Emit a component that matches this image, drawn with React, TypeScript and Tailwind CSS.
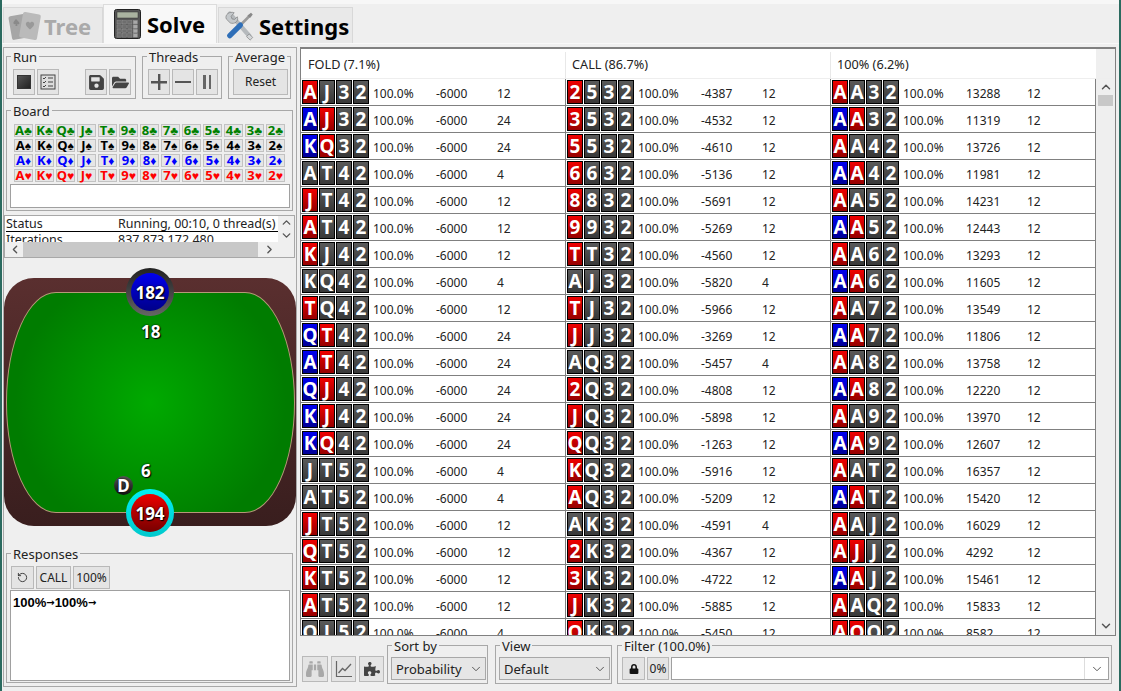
import type { ReactNode } from "react";
import { ChevronDown, ChevronLeft, ChevronRight, ChevronUp, RotateCcw } from "lucide-react";
import { FaBinoculars, FaFolderOpen, FaLock, FaPuzzlePiece, FaSave } from "react-icons/fa";

const BOARD_RANKS = ["A", "K", "Q", "J", "T", "9", "8", "7", "6", "5", "4", "3", "2"];
const BOARD_SUITS = [
  { suit: "♣", color: "text-[#008000]" },
  { suit: "♠", color: "text-black" },
  { suit: "♦", color: "text-[#0000ff]" },
  { suit: "♥", color: "text-[#ff0000]" },
];

const CARD_BG: Record<string, string> = {
  r: "from-[#f00000] to-[#960000]",
  b: "from-[#0000f0] to-[#000096]",
  g: "from-[#5a5a5a] to-[#383838]",
};

// cards, suit colours, ev, count
const FOLD_ROWS = [
  "AJ32 rggg -6000 12",
  "AJ32 brgg -6000 24",
  "KQ32 brgg -6000 24",
  "AT42 gggg -6000 4",
  "JT42 rggg -6000 12",
  "AT42 rggg -6000 12",
  "KJ42 rggg -6000 12",
  "KQ42 gggg -6000 4",
  "TQ42 rggg -6000 12",
  "QT42 brgg -6000 24",
  "AT42 brgg -6000 24",
  "QJ42 brgg -6000 24",
  "KJ42 brgg -6000 24",
  "KQ42 brgg -6000 24",
  "JT52 gggg -6000 4",
  "AT52 gggg -6000 4",
  "JT52 rggg -6000 12",
  "QT52 rggg -6000 12",
  "KT52 rggg -6000 12",
  "AT52 rggg -6000 12",
  "QJ52 gggg -6000 4",
];

const CALL_ROWS = [
  "2532 rggg -4387 12",
  "3532 rggg -4532 12",
  "5532 rggg -4610 12",
  "6632 rggg -5136 12",
  "8832 rggg -5691 12",
  "9932 rggg -5269 12",
  "TT32 rggg -4560 12",
  "AJ32 gggg -5820 4",
  "TJ32 rggg -5966 12",
  "JJ32 rggg -3269 12",
  "AQ32 gggg -5457 4",
  "2Q32 rggg -4808 12",
  "JQ32 rggg -5898 12",
  "QQ32 rggg -1263 12",
  "KQ32 rggg -5916 12",
  "AQ32 rggg -5209 12",
  "AK32 gggg -4591 4",
  "2K32 rggg -4367 12",
  "3K32 rggg -4722 12",
  "JK32 rggg -5885 12",
  "QK32 rggg -5450 12",
];

const RAISE_ROWS = [
  "AA32 rggg 13288 12",
  "AA32 brgg 11319 12",
  "AA42 rggg 13726 12",
  "AA42 brgg 11981 12",
  "AA52 rggg 14231 12",
  "AA52 brgg 12443 12",
  "AA62 rggg 13293 12",
  "AA62 brgg 11605 12",
  "AA72 rggg 13549 12",
  "AA72 brgg 11806 12",
  "AA82 rggg 13758 12",
  "AA82 brgg 12220 12",
  "AA92 rggg 13970 12",
  "AA92 brgg 12607 12",
  "AAT2 rggg 16357 12",
  "AAT2 brgg 15420 12",
  "AAJ2 rggg 16029 12",
  "AJJ2 rrgg 4292 12",
  "AAJ2 brgg 15461 12",
  "AAQ2 rggg 15833 12",
  "AQQ2 rrgg 8582 12",
];

function Group({ title, className, children }: { title: string; className: string; children?: ReactNode }) {
  return (
    <div className={`relative border border-[#a8a8a8] ${className}`}>
      <span className="absolute left-[4px] top-[-8px] bg-[#efefef] px-[2px] text-[13px] leading-[17px] text-[#222]">
        {title}
      </span>
      {children}
    </div>
  );
}

function ToolButton({ className, children }: { className: string; children?: ReactNode }) {
  return (
    <div className={`flex items-center justify-center border border-[#b9b9b9] bg-[#e4e4e4] ${className}`}>
      {children}
    </div>
  );
}

function Combo({ label, className }: { label: string; className: string }) {
  return (
    <div className={`flex h-[23px] items-center justify-between border border-[#a8a8a8] bg-[#e6e6e6] pl-[4px] pr-[2px] text-[13px] text-[#222] ${className}`}>
      <span className="pt-[2px]">{label}</span>
      <ChevronDown size={14} strokeWidth={1.5} className="text-[#444]" />
    </div>
  );
}

function HandCell({ row }: { row: string }) {
  const [cards, colors, ev, count] = row.split(" ");
  return (
    <div className="flex h-[26px] w-[265px] shrink-0 items-center border-r border-[#808080] pl-[1px] text-[12px] text-[#222]">
      <div className="flex w-[71px] gap-[1px]">
        {cards.split("").map((rank, i) => (
          <div
            key={i}
            className={`flex h-[24px] w-[16px] items-center justify-center border border-black bg-gradient-to-b text-[19px] font-bold leading-none text-white ${CARD_BG[colors[i]]}`}
          >
            {rank}
          </div>
        ))}
      </div>
      <div className="flex pt-[4px]">
        <span className="w-[63px]">100.0%</span>
        <span className="w-[61px]">{ev}</span>
        <span>{count}</span>
      </div>
    </div>
  );
}

function CardsIcon() {
  return (
    <svg width="34" height="32" viewBox="0 0 34 32">
      <rect x="2" y="5" width="17" height="24" rx="2" fill="#a6a6a6" transform="rotate(-10 10 16)" />
      <rect x="13" y="3" width="18" height="26" rx="2" fill="#bababa" transform="rotate(10 22 16)" />
      <path d="M22 13c-1.500-2.500-5-1-4 2 .6 1.700 2.500 3 4 4.500 1.500-1.500 3.400-2.800 4-4.500 1-3-2.500-4.500-4-2z" fill="#999" />
      <path d="M8 9c-1.600 2-3 3-2.500 4.500.4 1 1.600 1 2.300.4l-.4 2h2l-.2-2c.8.600 2 .5 2.200-.5C11.700 12 9.600 11 8 9z" fill="#8a8a8a" />
    </svg>
  );
}

function CalculatorIcon() {
  return (
    <svg width="27" height="30" viewBox="0 0 27 30">
      <rect x="0.500" y="0.500" width="26" height="29" rx="2" fill="#555" stroke="#222" />
      <rect x="3" y="3" width="21" height="6" fill="#aab3a0" stroke="#333" strokeWidth="0.500" />
      {[0, 1, 2, 3].map((r) =>
        [0, 1, 2, 3].map((c) => (
          <rect key={`${r}-${c}`} x={3 + c * 5.4} y={11.500 + r * 4.400} width="4.200" height="3.400" fill={c === 3 ? "#a8a8a8" : "#6e6e6e"} stroke="#999" strokeWidth="0.400" />
        )),
      )}
    </svg>
  );
}

function ToolsIcon() {
  return (
    <svg width="31" height="30" viewBox="0 0 34 34">
      <path d="M6 3 L28 28" stroke="#b5b9bc" strokeWidth="5" strokeLinecap="round" />
      <path d="M2 9c-2-5 4-9 9-7L7.500 6l1 3 3 .500 3-3c2 5-3 9-8 7z" fill="#c4c8cb" stroke="#777" strokeWidth="0.700" />
      <path d="M28 6 L19 15" stroke="#9a9a9a" strokeWidth="3" />
      <path d="M30 2l2 2-3 4-3-3z" fill="#888" />
      <path d="M18 16 L6 28" stroke="#2f6fb8" strokeWidth="6" strokeLinecap="round" />
      <path d="M28 26l4 4-3 3-4-4z" fill="#d3d6d8" stroke="#777" strokeWidth="0.700" />
    </svg>
  );
}

function ChecklistIcon() {
  return (
    <svg width="16" height="16" viewBox="0 0 16 16" fill="none" stroke="#444">
      <rect x="1" y="1" width="14" height="14" fill="#ddd" />
      <path d="M3 4l1 1 2-2M3 8l1 1 2-2M3 12l1 1 2-2" strokeWidth="1" />
      <path d="M8 4h5M8 8h5M8 12h5" strokeWidth="1.200" />
    </svg>
  );
}

function ChartIcon() {
  return (
    <svg width="18" height="18" viewBox="0 0 18 18" fill="none" stroke="#666">
      <path d="M1.500 1v15.500H17" strokeWidth="1.200" />
      <path d="M3.500 13l4-4.500 2.500 2L16 4" strokeWidth="1.300" />
    </svg>
  );
}

function SeatBadge({ value, ring, disc, className }: { value: string; ring: string; disc: string; className: string }) {
  return (
    <div className={`absolute flex h-[48px] w-[48px] items-center justify-center rounded-full bg-gradient-to-b ${ring} ${className}`}>
      <div className={`flex h-[38px] w-[38px] items-center justify-center rounded-full bg-gradient-to-b pt-[2px] text-[17px] font-bold text-white [text-shadow:0_0_2px_#000,1px_1px_1px_#000] ${disc}`}>
        {value}
      </div>
    </div>
  );
}

export default function App() {
  return (
    <div className="flex h-[691px] w-[1121px] flex-col overflow-hidden border-x-2 border-[#2b6a5f] bg-[#efefef] font-['Noto_Sans',sans-serif]">
      <div className="h-[4px] bg-[#f7f7f7]" />
      <div className="flex h-[40px] items-end border-b border-[#f8f8f8] pl-[1px]">
        <div className="flex h-[36px] w-[100px] items-center gap-[2px] border border-b-0 border-[#d8d8d8] bg-[#e9e9e9] pl-[4px] text-[22px] font-bold text-[#aaa]">
          <CardsIcon />
          <span className="pt-[1px]">Tree</span>
        </div>
        <div className="flex h-[39px] w-[114px] items-center gap-[6px] border border-b-0 border-[#dcdcdc] bg-[#f8f8f8] pl-[10px] text-[22px] font-bold text-black">
          <CalculatorIcon />
          <span className="pt-[1px]">Solve</span>
        </div>
        <div className="ml-[1px] flex h-[36px] w-[135px] items-center gap-[4px] border border-b-0 border-[#d8d8d8] bg-[#e9e9e9] pl-[5px] text-[22px] font-bold text-black">
          <ToolsIcon />
          <span className="pt-[1px]">Settings</span>
        </div>
      </div>

      <div className="flex h-[643px] pt-[3px]">
        {/* left side */}
        <div className="ml-[1px] w-[294px] border border-[#a8a8a8] bg-[#efefef]">
          <div className="ml-[2px] mt-[8px] flex gap-[6px]">
            <Group title="Run" className="flex h-[43px] w-[130px] items-start pl-[6px] pt-[12px]">
              <ToolButton className="h-[26px] w-[22px]">
                <div className="h-[14px] w-[14px] border border-[#333] bg-gradient-to-br from-[#555] to-[#222]" />
              </ToolButton>
              <ToolButton className="ml-[2px] h-[26px] w-[22px]">
                <ChecklistIcon />
              </ToolButton>
              <ToolButton className="ml-[26px] h-[26px] w-[22px]">
                <FaSave size={17} className="text-[#444]" />
              </ToolButton>
              <ToolButton className="ml-[2px] h-[26px] w-[22px]">
                <FaFolderOpen size={17} className="text-[#444]" />
              </ToolButton>
            </Group>
            <Group title="Threads" className="flex h-[43px] w-[80px] items-start gap-[2px] pl-[5px] pt-[12px]">
              <ToolButton className="h-[26px] w-[22px]">
                <svg width="16" height="16" viewBox="0 0 16 16" fill="#555"><path d="M7 0h2.400v7H16v2.400H9.400V16H7V9.400H0V7h7z" /></svg>
              </ToolButton>
              <ToolButton className="h-[26px] w-[22px]">
                <div className="h-[2.500px] w-[16px] bg-[#555]" />
              </ToolButton>
              <ToolButton className="h-[26px] w-[22px] gap-[3px]">
                <div className="h-[14px] w-[2.500px] bg-[#666]" />
                <div className="h-[14px] w-[2.500px] bg-[#666]" />
              </ToolButton>
            </Group>
            <Group title="Average" className="h-[43px] w-[63px] pl-[4px] pt-[12px]">
              <ToolButton className="h-[26px] w-[55px] text-[12px] text-[#222]">Reset</ToolButton>
            </Group>
          </div>

          <Group title="Board" className="ml-[2px] mt-[11px] h-[101px] w-[287px] pl-[3px] pt-[13px]">
            <div className="ml-[4px] flex flex-col gap-[2px]">
              {BOARD_SUITS.map(({ suit, color }) => (
                <div key={suit} className="flex gap-[2px]">
                  {BOARD_RANKS.map((rank) => (
                    <div
                      key={rank}
                      className={`flex h-[13px] w-[19px] items-center justify-center whitespace-nowrap border border-[#c2c2c2] bg-[#e6e6e6] text-[13px] font-bold leading-none ${color}`}
                    >
                      {rank}
                      <span className="text-[12px]">{suit}</span>
                    </div>
                  ))}
                </div>
              ))}
            </div>
            <div className="mt-[2px] h-[24px] w-[280px] border border-[#a0a0a0] bg-white" />
          </Group>

          <div className="mt-[4px] h-[43px] w-[291px] border border-[#a8a8a8] text-[12.500px] leading-[15px] text-[#222]">
            <div className="flex h-[26px]">
              <div className="w-[273px] overflow-hidden bg-white pl-[1px]">
                <div className="flex h-[16px] border-b border-black">
                  <span className="w-[112px]">Status</span>
                  <span className="whitespace-nowrap">Running, 00:10, 0 thread(s)</span>
                </div>
                <div className="flex">
                  <span className="w-[112px]">Iterations</span>
                  <span>837,873,172,480</span>
                </div>
              </div>
              <div className="flex w-[16px] flex-col items-center justify-between">
                <ChevronUp size={13} strokeWidth={2.500} className="text-[#555]" />
                <ChevronDown size={13} strokeWidth={2.500} className="text-[#555]" />
              </div>
            </div>
            <div className="flex h-[15px] items-center">
              <ChevronLeft size={13} strokeWidth={2.500} className="ml-[2px] w-[16px] text-[#555]" />
              <div className="h-[15px] w-[235px] bg-[#c8c8c8]" />
              <ChevronRight size={13} strokeWidth={2.500} className="ml-[4px] w-[15px] text-[#555]" />
            </div>
          </div>

          <div className="relative mt-[20px] h-[248px] w-[292px] rounded-[30px] bg-gradient-to-b from-[#5a2f2f] to-[#391e1e]">
            <div className="absolute left-[2px] top-[14px] h-[221px] w-[289px] rounded-[50px/110px] border border-[#b59a78] bg-[radial-gradient(circle,#00aa00,#007c00_75%)]" />
            <SeatBadge value="182" ring="from-[#222] to-[#666]" disc="from-[#0000ee] to-[#000088]" className="left-[122px] top-[-10px]" />
            <span className="absolute left-[137px] top-[42px] text-[17px] font-bold leading-[24px] text-white [text-shadow:0_0_2px_#000,1px_1px_1px_#000]">18</span>
            <span className="absolute left-[137px] top-[181px] text-[17px] font-bold leading-[24px] text-white [text-shadow:0_0_2px_#000,1px_1px_1px_#000]">6</span>
            <div className="absolute left-[110px] top-[198px] flex h-[19px] w-[19px] items-center justify-center rounded-full bg-gradient-to-b from-[#555] to-[#111] text-[17px] font-bold text-white [text-shadow:0_0_2px_#000]">
              D
            </div>
            <SeatBadge value="194" ring="from-[#00f0f5] to-[#00c8cc]" disc="from-[#ee0000] to-[#770000]" className="left-[122px] top-[211px]" />
          </div>

          <Group title="Responses" className="ml-[2px] mt-[27px] h-[130px] w-[287px] pl-[3px] pt-[12px]">
            <div className="flex gap-[2px] pl-[1px]">
              <ToolButton className="h-[23px] w-[23px]">
                <RotateCcw size={11} className="text-[#333]" />
              </ToolButton>
              <ToolButton className="h-[23px] w-[35px] text-[12px] text-[#222]">CALL</ToolButton>
              <ToolButton className="h-[23px] w-[37px] text-[12px] text-[#222]">100%</ToolButton>
            </div>
            <div className="mt-[1px] h-[91px] w-[280px] border border-[#a0a0a0] bg-white pl-[2px] pt-[4px] font-['Liberation_Sans',sans-serif] text-[13px] font-bold leading-[16px] text-black">
              100%<span className="align-[1px] font-['DejaVu_Sans'] text-[10px]">→</span>100%<span className="align-[1px] font-['DejaVu_Sans'] text-[10px]">→</span>
            </div>
          </Group>
        </div>

        {/* right side */}
        <div className="ml-[3px] w-[816px]">
          <div className="h-[589px] border border-t-2 border-[#808080] bg-white">
            <div className="flex h-[30px] border-b border-[#eeeeee] pt-[3px] text-[12.700px] text-[#222]">
              <div className="flex w-[265px] items-center border-r border-[#e8e8e8] pl-[7px]">FOLD (7.1%)</div>
              <div className="flex w-[265px] items-center border-r border-[#e8e8e8] pl-[6px]">CALL (86.7%)</div>
              <div className="flex w-[265px] items-center pl-[6px]">100% (6.2%)</div>
              <div className="mt-[-3px] flex-1 bg-[#efefef]" />
            </div>
            <div className="flex h-[556px]">
              <div className="h-[556px] w-[795px] overflow-hidden">
                {FOLD_ROWS.map((row, i) => (
                  <div key={i} className="flex h-[27px] border-b border-[#808080]">
                    <HandCell row={row} />
                    <HandCell row={CALL_ROWS[i]} />
                    <HandCell row={RAISE_ROWS[i]} />
                  </div>
                ))}
              </div>
              <div className="flex flex-1 flex-col items-center bg-[#efefef]">
                <ChevronUp size={14} strokeWidth={2.500} className="mt-[1px] text-[#555]" />
                <div className="mt-[1px] h-[11px] w-[15px] bg-[#c8c8c8]" />
                <div className="flex-1" />
                <ChevronDown size={14} strokeWidth={2.500} className="mb-[2px] text-[#555]" />
              </div>
            </div>
          </div>

          <div className="flex h-[49px] items-start pl-[2px]">
            <ToolButton className="mt-[20px] h-[26px] w-[26px] bg-[#d2d2d2]">
              <FaBinoculars size={18} className="text-[#a8a8a8]" />
            </ToolButton>
            <ToolButton className="ml-[3px] mt-[20px] h-[26px] w-[25px]">
              <ChartIcon />
            </ToolButton>
            <ToolButton className="ml-[3px] mt-[20px] h-[26px] w-[25px]">
              <FaPuzzlePiece size={16} className="text-[#444]" />
            </ToolButton>
            <Group title="Sort by" className="ml-[3px] mt-[9px] h-[39px] w-[101px] pl-[3px] pt-[11px]">
              <Combo label="Probability" className="w-[95px]" />
            </Group>
            <Group title="View" className="ml-[7px] mt-[9px] h-[39px] w-[117px] pl-[3px] pt-[11px]">
              <Combo label="Default" className="w-[111px]" />
            </Group>
            <Group title="Filter (100.0%)" className="ml-[5px] mt-[9px] flex h-[39px] w-[495px] gap-[2px] pl-[4px] pt-[11px]">
              <ToolButton className="h-[23px] w-[23px]">
                <FaLock size={10} className="text-[#111]" />
              </ToolButton>
              <ToolButton className="h-[23px] w-[22px] text-[12px] text-[#222]">0%</ToolButton>
              <div className="flex h-[23px] w-[438px] items-center justify-end border border-[#a0a0a0] bg-white">
                <div className="flex h-[21px] w-[24px] items-center justify-center border-l border-[#dddddd]">
                  <ChevronDown size={14} strokeWidth={1.500} className="text-[#444]" />
                </div>
              </div>
            </Group>
          </div>
        </div>
      </div>
    </div>
  );
}
